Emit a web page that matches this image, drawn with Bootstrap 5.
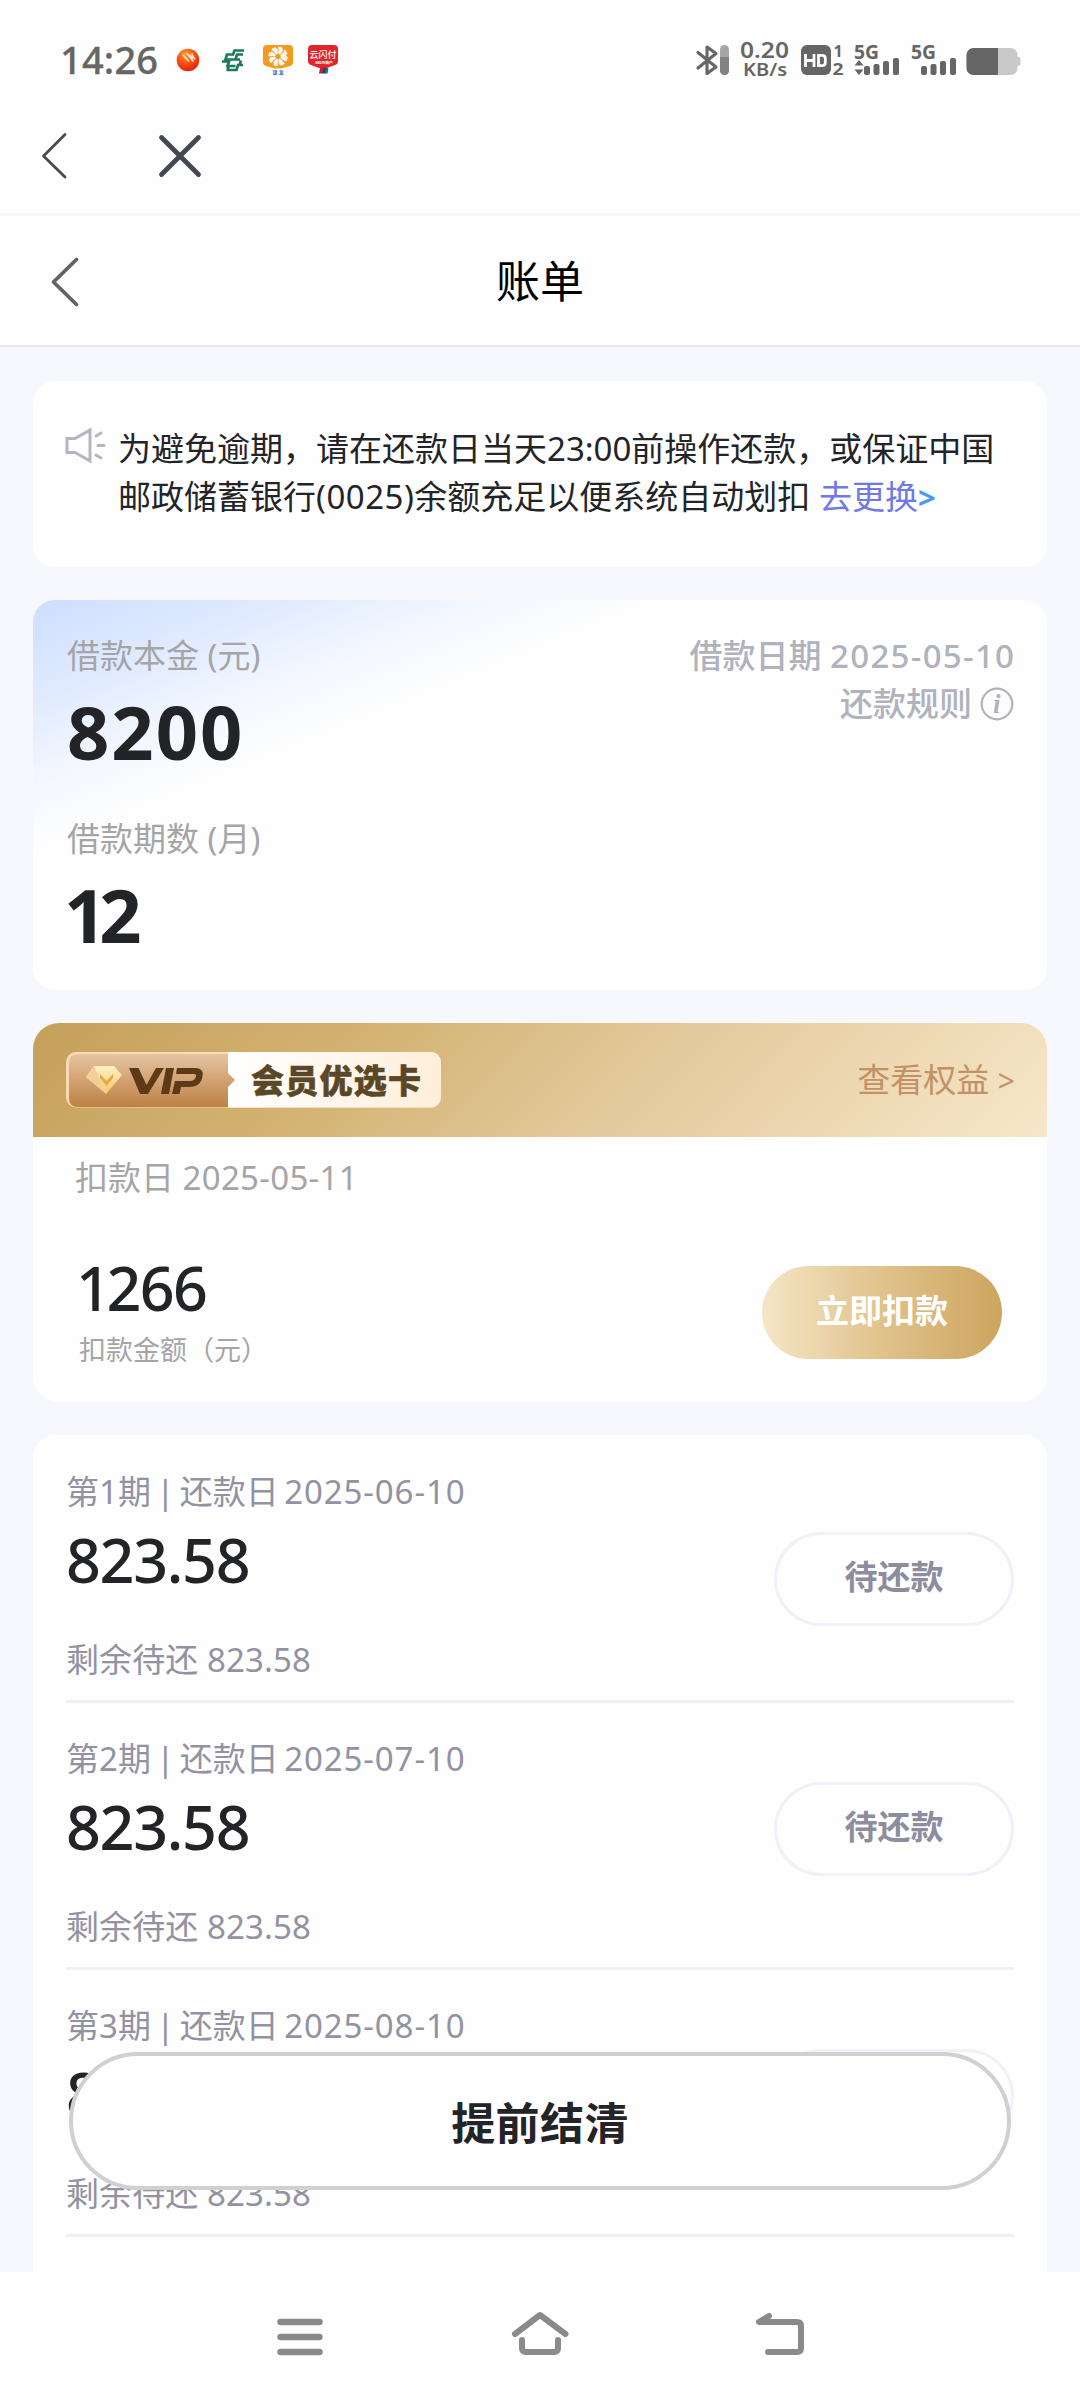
<!DOCTYPE html>
<html lang="zh-CN">
<head>
<meta charset="utf-8">
<meta name="viewport" content="width=device-width, initial-scale=1">
<title>账单</title>
<link href="https://cdn.jsdelivr.net/npm/bootstrap@5.3.0/dist/css/bootstrap.min.css" rel="stylesheet">
<style>
  body { font-family: "Noto Sans", "Noto Sans CJK SC", sans-serif; background: #f7f8fe; color: #232428; font-size: 33px; }
  .screen { width: 1080px; height: 2400px; overflow: hidden; }
  .tl { height: 48px; line-height: 48px; white-space: nowrap; }
  .status-bar { height: 120px; background: #fefefe; }
  .status-bar svg, .web-bar svg, .sys-nav svg, .page-head svg { display: block; flex: none; }
  .clock { width: 165px; padding-left: 60px; font-size: 38px; font-weight: 500; line-height: 119px; color: #666; letter-spacing: .2px; white-space: nowrap; -webkit-text-stroke: .3px #666; }
  .web-bar { height: 96px; background: #fefefe; border-bottom: 3px solid #f7f7f8; }
  .page-head { height: 131px; background: #fefefe; border-bottom: 2px solid #e9e9ee; }
  .page-title { font-size: 44px; line-height: 130px; color: #000; padding-right: 120px; }
  .feed { padding: 34px 33px 0; gap: 33px; min-height: 0; }
  .panel { background: #fefefe; border-radius: 22px; flex: none; }
  .notice { height: 186px; padding: 44px 0 0 32px; }
  .notice svg { margin-top: -3px; }
  .notice .acct { letter-spacing: .5px; }
  .notice .go { color: #6f78e6; }
  .notice .gt { color: #4a9af5; font-weight: 700; font-size: 31px; }
  .loan { height: 390px; padding: 32px 33px 0 34px; background: linear-gradient(158deg, #cddeff 0%, #e1ebff 13%, #f5f8ff 24%, #fefefe 32%); }
  .muted-cap { color: #a5a5a7; }
  .cool { color: #b0b2be; font-weight: 500; }
  .dt { letter-spacing: 1.3px; margin-right: -1.3px; }
  .dt-s { letter-spacing: .9px; }
  .dt-n { letter-spacing: .3px; }
  .big-num { font-size: 74px; font-weight: 700; height: 104px; line-height: 104px; letter-spacing: 2px; margin-bottom: 31px; }
  .big-num .one { letter-spacing: -7px; margin-left: -3px; }
  .vip { height: 379px; border-radius: 26px; overflow: hidden; }
  .vip-head { height: 114px; padding: 0 32px 0 33px; background: linear-gradient(135deg, #c5a05b 0%, #d3b271 30%, #e1c797 55%, #efdab6 82%, #f5e8c9 100%); }
  .vip-link { color: #c39168; }
  .vip-link .gt { font-size: 30px; }
  .vip-body { padding: 17px 45px 0 42px; }
  .vip-sum { padding: 50px 0 0 4px; }
  .vip-sum .mid-num { letter-spacing: -1.6px; margin-left: -3px; }
  .vip-sum .one { letter-spacing: -4.5px; }
  .vip-note { font-size: 27px; line-height: 51px; }
  .mid-num { font-size: 61px; font-weight: 500; height: 72px; line-height: 72px; white-space: nowrap; }
  .btn-gold { width: 240px; height: 93px; font-size: 33px; font-weight: 700; color: #fff; background: linear-gradient(90deg, #f5e6c6, #e0c28c 50%, #cda55e); border: 0; padding: 0 0 4px; margin-top: 64px; }
  .plan { padding: 0 33px; border-radius: 22px 22px 0 0; }
  .plan-end { height: 90px; }
  .term { height: 267px; padding-top: 32px; border-bottom: 3px solid #f1f1f4; color: #9292a3; }
  .term:first-child { height: 268px; padding-top: 33px; }
  .term-cap { word-spacing: -3.2px; }
  .term .mid-num { color: #232428; margin-top: 8px; letter-spacing: -1.3px; }
  .term-rest { margin-top: 40px; letter-spacing: .1px; }
  .btn-due { width: 240px; height: 94px; font-size: 33px; font-weight: 700; color: #8d8d9f; border: 3px solid #f1f1f9; background: #fefefe; padding: 0 0 4px; margin-top: 47px; }
  .term:first-child .btn-due { margin-top: 64px; }
  .settle { left: 69px; top: 1705px; width: 942px; height: 138px; border: 4px solid #d0d0d1; background: #fefefe; font-size: 44px; font-weight: 600; letter-spacing: .4px; color: #232428; padding: 4px 0 0; z-index: 3; }
  .sys-nav { height: 128px; background: #fefefe; z-index: 4; }
  svg text { font-family: "Noto Sans", "Noto Sans CJK SC", sans-serif; }
  svg .info-i { font-family: "Liberation Serif", serif; font-style: italic; }
</style>
</head>
<body>
<div class="screen d-flex flex-column">
  <header class="status-bar d-flex flex-shrink-0">
    <div class="clock flex-shrink-0">14:26</div>
    <svg width="47" height="120" viewBox="165 0 47 120">
      <defs><radialGradient id="ball" cx=".4" cy=".25" r=".8"><stop offset="0" stop-color="#ff9a28"/><stop offset=".5" stop-color="#fa5212"/><stop offset="1" stop-color="#dd1d12"/></radialGradient></defs>
      <circle cx="188" cy="60" r="11.3" fill="url(#ball)"/>
      <path d="M183 55l5.500 6M187 53.500l6 7.500M190 55l2.500 3M192 54l2.500 5" stroke="#ffe3cf" stroke-width="1.600" stroke-linecap="round"/>
    </svg>
    <svg width="43" height="120" viewBox="212 0 43 120" fill="none" stroke="#1b7a5c" stroke-width="2.700">
      <path d="M244 50.500H234.500l-1.500 4H227l-1.500 5H240M243 54.500H237l-1.500 5M222 61.500h7l-1.500 4.500h8M226.500 70h10l1.500-5h5M229 65.500l-1.500 4.500M241 60.500l-1.500 4.500"/>
    </svg>
    <svg width="45" height="120" viewBox="255 0 45 120">
      <path d="M267 45h22q4 0 4 4v13q0 3-3 4l-9 2.500h-6L266 66q-3-1-3-4V49q0-4 4-4z" fill="#f5991f"/>
      <circle cx="278" cy="56.500" r="5.500" fill="none" stroke="#fff" stroke-width="5.500" stroke-dasharray="3.400 .9"/>
      <circle cx="278" cy="56.500" r="8.800" fill="none" stroke="#fff" stroke-width="1.800" stroke-dasharray="4.400 2.500"/>
      <text x="272.500" y="73.500" font-size="5" font-weight="700" fill="#2473c2">银 发</text>
    </svg>
    <svg width="50" height="120" viewBox="300 0 50 120">
      <path d="M312 45h22q4 0 4 4v12q0 3-3 4l-8 3h-8l-8-3q-3-1-3-4V49q0-4 4-4z" fill="#e2252b"/>
      <text x="309.500" y="58" font-size="9" font-weight="500" fill="#fff">云闪付</text>
      <text x="315" y="63.500" font-size="3.800" font-weight="700" fill="#fff">360万商户</text>
      <path d="M320 68h4l-1 5.500h-4z" fill="#b3283a"/><path d="M323.500 68h3l-1 5.500h-3z" fill="#14456e"/><path d="M326 68h2.500l-1 5.500H325z" fill="#147a74"/>
    </svg>
    <svg class="ms-auto" width="46" height="120" viewBox="690 0 46 120">
      <path d="M698 52.500l18 14.500-9 6.500V47l9 6.500L698 68" fill="none" stroke="#666" stroke-width="3.100" stroke-linejoin="round" stroke-linecap="round"/>
      <rect x="720" y="45" width="9" height="30" rx="4.500" fill="#a6a6a6"/><path d="M720 57h9v13.500a4.500 4.500 0 0 1-9 0z" fill="#828282"/>
    </svg>
    <svg width="60" height="120" viewBox="736 0 60 120" fill="#666" font-weight="600">
      <text x="740" y="58" font-size="21" textLength="49" lengthAdjust="spacingAndGlyphs">0.20</text>
      <text x="743" y="76" font-size="17.500" textLength="44" lengthAdjust="spacingAndGlyphs">KB/s</text>
    </svg>
    <svg width="54" height="120" viewBox="796 0 54 120" fill="#666">
      <rect x="801" y="45" width="30" height="30" rx="6"/>
      <path d="M805.500 54v13M814 54v13M805.500 60.500H814M818.500 55.300v10.400h3.500q3.300 0 3.300-3v-4.400q0-3-3.300-3z" fill="none" stroke="#fff" stroke-width="2.800"/>
      <text x="833.500" y="57" font-size="16" font-weight="700">1</text><text x="832.500" y="74.500" font-size="16" font-weight="700" textLength="11" lengthAdjust="spacingAndGlyphs">2</text>
    </svg>
    <svg width="57" height="120" viewBox="850 0 57 120" fill="#666">
      <text x="854" y="59" font-size="19" font-weight="700" textLength="25" lengthAdjust="spacingAndGlyphs">5G</text>
      <path d="M859 60l4.500 5.500h-9zM859 75l4.500-5.500h-9z"/>
      <rect x="864" y="66" width="6" height="9" rx="2"/><rect x="873.500" y="64" width="6" height="11" rx="2"/><rect x="883" y="61" width="6" height="14" rx="2"/><rect x="893" y="58" width="6" height="17" rx="2"/>
    </svg>
    <svg width="55" height="120" viewBox="907 0 55 120" fill="#666">
      <text x="911" y="59" font-size="19" font-weight="700" textLength="25" lengthAdjust="spacingAndGlyphs">5G</text>
      <rect x="921" y="66" width="6" height="9" rx="2"/><rect x="930.500" y="64" width="6" height="11" rx="2"/><rect x="940" y="61" width="6" height="14" rx="2"/><rect x="950" y="58" width="6" height="17" rx="2"/>
    </svg>
    <svg width="118" height="120" viewBox="962 0 118 120">
      <rect x="966.500" y="48" width="51" height="27" rx="7" fill="#c9c9c9"/><path d="M998 48v27h-24.500a7 7 0 0 1-7-7V55a7 7 0 0 1 7-7z" fill="#666"/><path d="M1017 57h1q2.500 0 2.500 3v3q0 3-2.500 3h-1z" fill="#c9c9c9"/>
    </svg>
  </header>

  <nav class="web-bar d-flex flex-shrink-0">
    <svg width="120" height="93" viewBox="0 120 120 93" fill="none" stroke="#4a4a4a" stroke-width="2.800" stroke-linecap="round" stroke-linejoin="round"><path d="M65 134.500L43.500 156 65 177"/></svg>
    <svg width="120" height="93" viewBox="120 120 120 93" fill="none" stroke="#41484f" stroke-width="4.800" stroke-linecap="round"><path d="M161.500 137.500l37 37M198.500 137.500l-37 37"/></svg>
  </nav>

  <div class="page-head d-flex flex-shrink-0">
    <svg width="120" height="129" viewBox="0 216 120 129" fill="none" stroke="#636366" stroke-width="3.800" stroke-linecap="round" stroke-linejoin="round"><path d="M76.500 259.500L53.500 282 76.500 304.500"/></svg>
    <h1 class="page-title flex-grow-1 text-center fw-normal m-0">账单</h1>
  </div>

  <main class="feed flex-grow-1 d-flex flex-column position-relative">
    <section class="panel notice d-flex">
      <svg class="flex-shrink-0" width="53" height="48" viewBox="65 422 53 48" fill="none" stroke="#b4b5c2" stroke-width="3">
        <path d="M67 438.500h8L90 430v31l-15-8.500h-8z"/><path d="M96 436l5-3M98 445.500h6M96 455l5 3" stroke-linecap="round"/>
      </svg>
      <div>
        <div class="tl">为避免逾期，请在还款日当天23:00前操作还款，或保证中国</div>
        <div class="tl">邮政储蓄银行<span class="acct">(0025)</span>余额充足以便系统自动划扣 <span class="go">去更换</span><span class="gt">&gt;</span></div>
      </div>
    </section>

    <section class="panel loan d-flex justify-content-between">
      <div>
        <div class="tl muted-cap">借款本金 (元)</div>
        <div class="big-num">8200</div>
        <div class="tl muted-cap">借款期数 (月)</div>
        <div class="big-num"><span class="one">1</span>2</div>
      </div>
      <div class="cool d-flex flex-column align-items-end">
        <div class="tl">借款日期 <span class="dt">2025-05-10</span></div>
        <div class="tl d-flex align-items-center gap-2">还款规则
          <svg width="34" height="34" viewBox="0 0 34 34"><circle cx="17" cy="17" r="15.300" fill="none" stroke="#b0b2be" stroke-width="2.200"/><text class="info-i" x="13" y="26" font-size="27" font-weight="700" fill="#b0b2be">i</text></svg>
        </div>
      </div>
    </section>

    <section class="panel vip">
      <div class="vip-head d-flex justify-content-between align-items-center">
        <svg width="376" height="56" viewBox="66 1052 376 56">
          <defs>
            <linearGradient id="bz" x1="0" y1="0" x2="0" y2="1"><stop offset="0" stop-color="#e5c5a3"/><stop offset=".5" stop-color="#d2a272"/><stop offset="1" stop-color="#bd8144"/></linearGradient>
            <linearGradient id="cr" x1="0" x2="1"><stop offset="0" stop-color="#fff"/><stop offset="1" stop-color="#ffeeda"/></linearGradient>
            <linearGradient id="dm" x1="0" y1="0" x2="0" y2="1"><stop offset="0" stop-color="#fff0c4"/><stop offset="1" stop-color="#f8c765"/></linearGradient>
          </defs>
          <rect x="66" y="1052" width="375" height="55.500" rx="10" fill="#fbd9b2"/>
          <path d="M228 1052h203a10 10 0 0 1 10 10v35.500a10 10 0 0 1-10 10H228z" fill="url(#cr)"/>
          <path d="M78 1054h150v19l7 7-7 7v20H78q-9 0-9-9v-35q0-9 9-9z" fill="url(#bz)"/>
          <path d="M94 1066h20l8 9-16 19-20-17z" fill="url(#dm)"/><path d="M86 1077l8-11 5 11 8 17z" fill="#f3d09a"/>
          <path d="M100 1074l6.500 7 6.500-7v4l-6.500 8-6.500-8z" fill="#e8a849"/>
          <g fill="#5d3a17"><path d="M129 1068h9.500l8 17 9.500-17h8l-16 26h-8z"/><path d="M166 1068h8l-5 26h-8z"/><path d="M177 1068h18q9 0 7.500 8-1.500 11-13.500 11h-8l-1.500 7H172l3-13h15q5 0 6-5 .500-2-2.500-2H176z"/></g>
          <text x="251" y="1092.500" font-size="33" font-weight="900" fill="#594725" stroke="#594725" stroke-width=".5" textLength="170">会员优选卡</text>
        </svg>
        <div class="vip-link tl">查看权益 <span class="gt">&gt;</span></div>
      </div>
      <div class="vip-body">
        <div class="tl muted-cap">扣款日 <span class="dt-n">2025-05-11</span></div>
        <div class="d-flex justify-content-between">
          <div class="vip-sum">
            <div class="mid-num"><span class="one">1</span>266</div>
            <div class="muted-cap vip-note">扣款金额（元）</div>
          </div>
          <button class="btn btn-gold rounded-pill">立即扣款</button>
        </div>
      </div>
    </section>

    <section class="panel plan">
      <div class="term d-flex justify-content-between">
        <div><div class="tl term-cap">第1期 | 还款日 <span class="dt-s">2025-06-10</span></div><div class="mid-num">823.58</div><div class="tl term-rest">剩余待还 823.58</div></div>
        <button class="btn btn-due rounded-pill">待还款</button>
      </div>
      <div class="term d-flex justify-content-between">
        <div><div class="tl term-cap">第2期 | 还款日 <span class="dt-s">2025-07-10</span></div><div class="mid-num">823.58</div><div class="tl term-rest">剩余待还 823.58</div></div>
        <button class="btn btn-due rounded-pill">待还款</button>
      </div>
      <div class="term d-flex justify-content-between">
        <div><div class="tl term-cap">第3期 | 还款日 <span class="dt-s">2025-08-10</span></div><div class="mid-num">823.58</div><div class="tl term-rest">剩余待还 823.58</div></div>
        <button class="btn btn-due rounded-pill">待还款</button>
      </div>
      <div class="plan-end"></div>
    </section>

    <button class="btn settle rounded-pill position-absolute">提前结清</button>
  </main>

  <footer class="sys-nav d-flex flex-shrink-0 justify-content-center">
    <svg width="240" height="128" viewBox="180 2272 240 128" stroke="#8a8a8a" stroke-width="6.400" stroke-linecap="round"><path d="M280.500 2322h39M280.500 2337h39M280.500 2352h39"/></svg>
    <svg width="240" height="128" viewBox="420 2272 240 128" fill="none" stroke="#8a8a8a" stroke-width="6" stroke-linecap="round" stroke-linejoin="round"><path d="M515 2334l25-19 25.500 19M522 2340v8q0 4 4 4h28q4 0 4-4v-8"/></svg>
    <svg width="240" height="128" viewBox="660 2272 240 128" fill="none" stroke="#8a8a8a" stroke-width="6" stroke-linecap="round" stroke-linejoin="round"><path d="M769 2316l-10 6h38q4 0 4 4v22q0 4-4 4h-29"/></svg>
  </footer>
</div>
<script src="https://cdn.jsdelivr.net/npm/bootstrap@5.3.0/dist/js/bootstrap.bundle.min.js"></script>
</body>
</html>
